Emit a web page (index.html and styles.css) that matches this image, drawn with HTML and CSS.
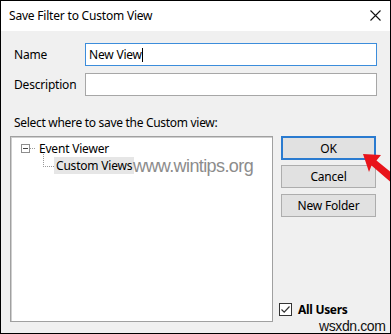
FILE: index.html
```html
<!DOCTYPE html>
<html lang="en">
<head>
  <meta charset="UTF-8">
  <title>Save Filter to Custom View</title>
  <link rel="stylesheet" href="styles.css">
</head>
<body>
  <div class="window">
    <div class="titlebar">
      <div class="title">Save Filter to Custom View</div>
      <div class="close-btn">
        <svg width="11" height="11" viewBox="0 0 11 11">
          <path d="M0.5 0.5 L10.5 10.5 M10.5 0.5 L0.5 10.5" stroke="#111" stroke-width="1.1" fill="none"/>
        </svg>
      </div>
    </div>

    <div class="content">
      <div class="field-row">
        <label class="field-label">Name</label>
        <div class="text-input focused">New View<span class="caret"></span></div>
      </div>
      <div class="field-row">
        <label class="field-label">Description</label>
        <div class="text-input"></div>
      </div>

      <div class="section-label">Select where to save the Custom view:</div>

      <div class="main-area">
        <div class="tree-box">
          <div class="tree-row">
            <span class="expander"><span class="minus"></span></span>
            <span class="dots-h"></span>
            <span class="tree-text">Event Viewer</span>
          </div>
          <div class="tree-row child">
            <span class="elbow"></span>
            <span class="tree-text selected">Custom Views</span>
          </div>
          <!-- watermark over the tree -->
          <div class="watermark">www.wintips.org</div>
        </div>

        <div class="side-column">
          <div class="btn default">OK</div>
          <div class="btn">Cancel</div>
          <div class="btn">New Folder</div>
          <div class="check-row">
            <svg class="checkbox" width="13" height="13" viewBox="0 0 13 13">
              <rect x="0.5" y="0.5" width="12" height="12" fill="#fff" stroke="#333"/>
              <path d="M2.5 6.5 L5.2 9.2 L10.5 3.5" stroke="#333" stroke-width="1.2" fill="none"/>
            </svg>
            <span class="check-label">All Users</span>
          </div>
        </div>
      </div>
    </div>

    <!-- red pointer arrow -->
    <svg class="red-arrow" width="30" height="34" viewBox="0 0 30 34">
      <path d="M0 0 L18 1 L13.5 6.5 L30 20 L30 30 L8.5 11.5 L6 18 Z" fill="#e8141b"/>
    </svg>

    <div class="site-mark">wsxdn.com</div>
  </div>
</body>
</html>
```

FILE: styles.css
```css
body {
  margin: 0;
  background: #ffffff;
  font-family: "Noto Sans", "Open Sans", sans-serif;
  font-size: 12px;
  color: #000000;
}

.window {
  width: 391px;
  height: 334px;
  box-sizing: border-box;
  border: 1px solid #000000;
  display: flex;
  flex-direction: column;
  position: relative;
  overflow: hidden;
}

.titlebar {
  height: 30px;
  flex-shrink: 0;
  background: #ffffff;
  display: flex;
  align-items: center;
  justify-content: space-between;
  padding: 0 8px 0 8px;
}

.title {
  font-size: 12px;
  letter-spacing: -0.2px;
  padding-bottom: 2px;
}

.close-btn {
  width: 11px;
  height: 11px;
  margin-right: 1px;
  margin-top: -2px;
}

.close-btn svg {
  display: block;
}

.content {
  flex: 1;
  background: #f0f0f0;
  padding: 12px 13px 11px 9px;
  display: flex;
  flex-direction: column;
}

.field-row {
  display: flex;
  align-items: center;
  margin-bottom: 7px;
  padding-left: 4px;
}

.field-label {
  width: 71px;
  flex-shrink: 0;
  letter-spacing: -0.2px;
}

.text-input {
  flex: 1;
  height: 23px;
  box-sizing: border-box;
  background: #ffffff;
  border: 1px solid #a7a7a7;
  padding: 0 0 0 3px;
  display: flex;
  align-items: center;
  letter-spacing: -0.2px;
}

.text-input.focused {
  border-color: #3c8ddb;
}

.caret {
  display: inline-block;
  width: 1px;
  height: 14px;
  background: #000000;
}

.section-label {
  padding-left: 4px;
  margin-top: 11px;
  margin-bottom: 5px;
  letter-spacing: -0.3px;
}

.main-area {
  flex: 1;
  display: flex;
  gap: 8px;
}

.tree-box {
  width: 263px;
  box-sizing: border-box;
  background: #ffffff;
  border: 1px solid #a0a0a0;
  box-shadow: inset 1px 1px 0 #cfcfcf;
  padding: 3px 0 0 10px;
  position: relative;
}

.tree-row {
  display: flex;
  align-items: center;
  height: 17px;
}

.expander {
  width: 7px;
  height: 7px;
  border: 1px solid #8e8e8e;
  background: #ffffff;
  display: flex;
  align-items: center;
  justify-content: center;
}

.minus {
  width: 5px;
  height: 1px;
  background: #444444;
}

.dots-h {
  width: 5px;
  border-top: 1px dotted #9a9a9a;
  margin-right: 2px;
}

.tree-text {
  padding: 0 2px;
  line-height: 17px;
  letter-spacing: -0.2px;
}

.tree-text.selected {
  background: #e6e6e6;
}

.tree-row.child {
  padding-left: 22px;
}

.elbow {
  width: 10px;
  height: 12px;
  margin-top: -11px;
  border-left: 1px dotted #9a9a9a;
  border-bottom: 1px dotted #9a9a9a;
}

.watermark {
  position: absolute;
  left: 122px;
  top: 19px;
  font-family: "Liberation Sans", Arial, sans-serif;
  font-size: 18px;
  letter-spacing: -0.6px;
  color: #8c8c8c;
}

.side-column {
  flex: 1;
  display: flex;
  flex-direction: column;
  gap: 6px;
}

.btn {
  height: 23px;
  box-sizing: border-box;
  background: #e1e1e1;
  border: 1px solid #adadad;
  display: flex;
  align-items: center;
  justify-content: center;
  letter-spacing: -0.2px;
  margin-right: 1px;
}

.btn.default {
  height: 24px;
  border: 2px solid #2a7bd0;
  margin-bottom: -1px;
}

.check-row {
  margin-top: auto;
  display: flex;
  align-items: center;
  gap: 6px;
  margin-bottom: 4px;
  margin-left: -2px;
}

.checkbox {
  display: block;
}

.check-label {
  font-weight: 700;
  letter-spacing: -0.3px;
}

.red-arrow {
  position: absolute;
  left: 362px;
  top: 153px;
}

.site-mark {
  position: absolute;
  left: 318px;
  top: 317px;
  font-family: "Liberation Sans", Arial, sans-serif;
  font-size: 14px;
  letter-spacing: -0.4px;
  color: #111111;
}
```
